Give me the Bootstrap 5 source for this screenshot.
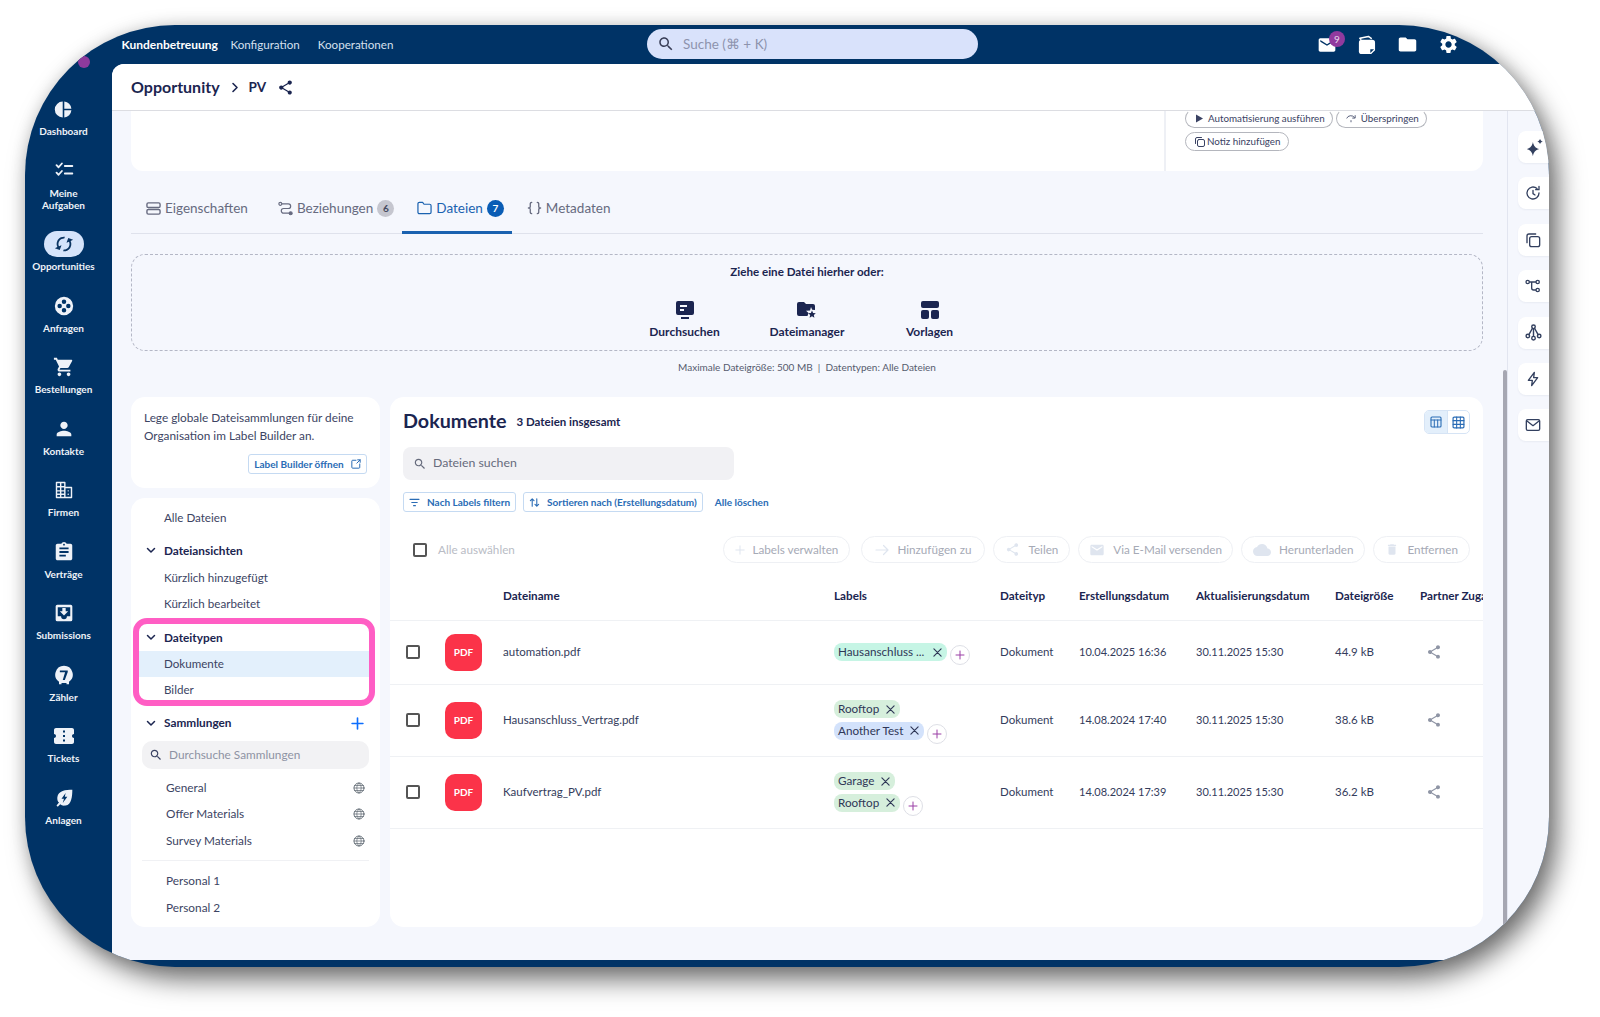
<!DOCTYPE html>
<html lang="de">
<head>
<meta charset="utf-8">
<title>Opportunity PV</title>
<link href="https://cdn.jsdelivr.net/npm/bootstrap@5.3.0/dist/css/bootstrap.min.css" rel="stylesheet">
<style>
html,body{height:100%;background:#fff;overflow:hidden}
body{font-family:Lato,"Liberation Sans",sans-serif;font-size:12px;color:#2f3757;-webkit-font-smoothing:antialiased}
svg.ic{display:block;fill:currentColor;flex:none}
svg.ln{display:block;fill:none;stroke:currentColor;stroke-width:2;stroke-linecap:round;stroke-linejoin:round;flex:none}
.win{width:1524px;height:942px;margin:25px 0 0 25px;border-radius:150px;overflow:hidden;background:#003366;box-shadow:9px 13px 26px rgba(0,0,0,.55),0 0 16px rgba(0,0,0,.12);display:flex;flex-direction:column;position:relative}
.c0{width:45px}.c1a{width:58px}.c2a{width:331px}.c3a{width:166px}.c4a{width:79px}.c5a{width:117px}.c6a{width:139px}.c7a{width:85px}.c8a{width:100px}
.topbar{height:39px;flex:none;position:relative;color:#fff}
.topnav{position:absolute;left:96.500px;top:12px;font-size:11.600px;line-height:15px;color:#d6e0ee}
.topnav b{color:#fff;font-weight:700;font-size:12px;margin-right:12.500px}
.topnav span+span{margin-left:18px}
.gsearch{position:absolute;left:622px;top:4px;width:331px;height:30px;border-radius:15px;background:#d9e2fb;color:#3a3f58;padding-left:10px;gap:8px;font-size:13.500px}
.gsearch span{color:#8d93ad}
.topico{position:absolute;left:1292px;top:0;height:39px;color:#fff}
.tmail{width:20px;margin-right:20px}
.tcopy{margin-right:21px}
.tfold{margin-right:20px}
.msgdot{position:absolute;left:12px;top:-4px;width:16px;height:16px;border-radius:50%;background:#913a9e;color:#e8d8ee;font-size:10px;line-height:16px;text-align:center}
.bodyrow{flex:1;min-height:0;display:flex}
.side{width:87px;flex:none;padding:32px 10px 0 0;color:#fff;position:relative}
.side-dot{position:absolute;left:53px;top:-8px;width:12px;height:12px;border-radius:50%;background:#8e3a9d}
.sitem{display:flex;flex-direction:column;align-items:center;margin-bottom:20.500px;font-size:10px;line-height:12px;font-weight:700;text-align:center;color:#eef2f8}
.sico{height:26px;width:40px;border-radius:13px;display:flex;align-items:center;justify-content:center;margin-bottom:3px}
.sitem.on .sico{background:#d5e4fb;color:#0b3563}
.sitem.on svg{transform:rotate(65deg)}
.mainp{flex:1;min-width:0;margin-bottom:7px;background:#f5f7fd;border-top-left-radius:12px;display:flex;flex-direction:column;overflow:hidden}
.crumb{height:47px;flex:none;background:#fff;border-bottom:1px solid #dcdde2;padding-left:19px;color:#1b2550}
.crumb .cx1{font-size:16px;font-weight:700;margin-right:11px}
.crumb .cx2{font-size:13.500px;font-weight:700;margin:0 11px 0 9px}
.panes{flex:1;min-height:0;display:flex}
.pane{flex:1;min-width:0;padding:0 24px 0 19px;position:relative;overflow:hidden}
.sbar{position:absolute;right:0;top:259px;bottom:0;width:4px;background:#a6a7b2;border-radius:2px 2px 0 0}
.rail{width:42px;flex:none;border-left:1px solid #e2e5f0;padding-top:20px;display:flex;flex-direction:column;align-items:flex-end;gap:14.400px}
.rbtn{width:31px;height:32px;background:#fff;border-radius:8px 0 0 8px;display:flex;align-items:center;padding-left:7px;color:#33405f;box-shadow:0 1px 2px rgba(40,50,90,.06)}
.topcard{height:60px;background:#fff;border-radius:0 0 12px 12px;position:relative;display:flex;justify-content:flex-end}
.acts{width:319px;border-left:2px solid #eef0f5;padding:0 0 0 19px;display:flex;flex-wrap:wrap;align-content:flex-start;gap:4px 3px}
.apill{height:19px;border:1px solid #b4b6bd;border-radius:10px;font-size:9.800px;line-height:17px;padding:0 7px 0 9px;color:#3a4263;display:flex;align-items:center;gap:5px;background:#fff}
.apill.tight{gap:1px;padding-left:8px}
.apill.cut{border-top-color:transparent;margin-top:-2px}
.tabsrow{height:63px;border-bottom:1px solid #dfe2ec;align-items:flex-end;flex-wrap:nowrap}
.tabi{height:61px;padding:0 15px;display:flex;align-items:center;gap:4px;font-size:13.500px;color:#676b80;border-bottom:3px solid transparent;margin-bottom:-1px;padding-top:12px;--bs-nav-link-color:#676b80}
.tabi.on{color:#1a62b0;border-bottom-color:#1a62b0}
.tcount{width:17px;height:17px;border-radius:50%;background:#c5c6cf;color:#444a60;font-size:10px;line-height:17px;text-align:center;padding:0;font-weight:700}
.tabi.on .tcount{background:#0a5db5;color:#fff}
.drop{height:97px;margin-top:20px;border:1px dashed #b4b7c6;border-radius:14px;padding-top:9px;text-align:center;color:#1b2550}
.drop .dt{font-size:11.600px;line-height:15px;font-weight:700}
.dacts{margin-top:21px}
.dact{width:122.500px;font-size:12px;font-weight:700;line-height:15px;display:flex;flex-direction:column;align-items:center;gap:4px}
.dnote{text-align:center;font-size:10px;line-height:14px;color:#555b6e;margin-top:9px;margin-bottom:23px}
.cols{gap:10px;height:530px}
.lcol{width:249px;flex:none;display:flex;flex-direction:column;gap:10px}
.box{background:#fff;border-radius:14px}
.info{height:91px;padding:12px 13px 0;line-height:17.500px;color:#3c4463;font-size:11.800px}
.lbtn{height:20px;border:1px solid #c5daf2;border-radius:3px;color:#2a6cb5;font-size:10px;font-weight:700;gap:7px;padding:0;margin:10px 0 0 auto;width:119px;line-height:18px;justify-content:center;white-space:nowrap}
.tree{flex:1;padding-top:6px;position:relative}
.trow{height:26.500px;display:flex;align-items:center;padding-left:33px;color:#3c4463;font-size:11.600px}
.trow.hd{font-weight:700;color:#1b2550;padding-left:15px;gap:8px;font-size:11.800px}
.trow.sub{padding-left:35px;justify-content:space-between;padding-right:15px;font-size:11.800px}
.mt7{margin-top:7px}
.hl{margin:1px 5px 4px 2px;height:88px;border:6px solid #ff5ec4;border-radius:14px;overflow:hidden}
.hl .trow{height:26px;padding-left:25px}
.hl .trow.hd{padding-left:7px;height:27px}
.hl .trow.sel{background:#e3f0fc}
.tsearch{margin:4px 11px 6px;height:28px;border-radius:10px;background:#f2f2f4;gap:6px;padding-left:7px;color:#8e92a3;font-size:11.800px}
.tsearch svg{color:#3a4263}
.thr{border-top:1px solid #f0f1f4;margin:6px 11px 7px}
.rcol{flex:1;min-width:0;overflow:hidden;padding-top:13px}
.rhead{padding:0 13px;height:24px}
.rhead h2{font-size:19.700px;font-weight:700;color:#1b2550;margin:-3px 0 0}
.rhead small{font-size:11.500px;font-weight:700;color:#1b2550;margin-left:10px;margin-top:0}
.vtog{height:24px;width:46px;border:1px solid #d6e4f5;border-radius:5px;overflow:hidden;color:#2a6cb5}
.vtog span{flex:1;display:flex;align-items:center;justify-content:center}
.vtog span:first-child{background:#e3effb;border-right:1px solid #d6e4f5}
.fsearch{margin:13px 0 0 13px;width:331px;height:33px;background:#f1f1f4;border-radius:8px;padding-left:10px;gap:6px;color:#666b7c;font-size:12.300px}
.frow{margin:12px 13px 0;height:20px;gap:7px}
.fbtn{height:20px;border:1px solid #c5daf2;border-radius:3px;color:#2a6cb5;font-size:10px;font-weight:700;padding:0 5px;gap:7px;line-height:18px}
.fclear{color:#2a6cb5;font-size:10px;font-weight:700;margin-left:5px}
.tools{margin:24px 13px 0 23px;height:27px;color:#b9bcc5;font-size:11.700px}
.cbx{width:14px;height:14px;margin:0;border:2px solid #555;border-radius:2px;background:#fff;flex:none}
.alltxt{margin-left:11px}
.tbtn{height:27px;border:1px solid #eef0f4;color:#a6aab6;font-size:11.700px;padding:0 11px;gap:8px;line-height:25px}
.tbtn svg{color:#dfe5ef}
.tbtn.wide{padding:0 13px}
.tbtn.slim{padding:0 10px}
.tbtn.first{margin-right:3px}
.tgap{gap:8px}
.dtable{width:1120px;table-layout:fixed;margin:9px 0 0;--bs-table-border-color:#eff1f4;--bs-table-color:#343c5c;font-size:11.500px}
.dtable th{height:48px;font-weight:700;font-size:11.700px;color:#1b2550;padding:0 10px;vertical-align:middle;white-space:nowrap;overflow:hidden;text-overflow:clip}
.dtable td{padding:0 10px;vertical-align:middle}
.dtable td:first-child{padding-left:16px}
.dtable td.dtm{font-size:11px}
.dtable tr.r1 td{height:64px}
.dtable tr.r2 td,.dtable tr.r3 td{height:72px}
.pdfi{width:37px;height:37px;border-radius:10px;background:#fb3349;color:#fff;font-size:10px;font-weight:700;display:flex;align-items:center;justify-content:center}
.lbl{height:18px;border-radius:8px;padding:0 5px 0 4px;font-size:11.700px;display:inline-flex;align-items:center;gap:7px;color:#2f3757;white-space:nowrap}
.lbl.g{background:#d6efdc}.lbl.b{background:#d3e2fb}.lbl.t{background:#c6f5e5;gap:9px}
.lrow{gap:3px;height:18px;margin:3.500px 0}
.ladd{width:20px;height:20px;border-radius:50%;border:1px solid #dedfe6;background:#fff;color:#9a3fa5;display:flex;align-items:center;justify-content:center;margin-top:2px}
.shr{color:#8f95a5}
.shr svg{margin-left:6px}
</style>
</head>
<body>
<svg class="d-none">
<symbol id="i-pie" viewBox="0 0 24 24"><path d="M11 2a10 10 0 0 0 0 20zM13 2a10 10 0 0 1 9 9h-9zM13 13h9a10 10 0 0 1-9 9z"/></symbol>
<symbol id="i-sync" viewBox="0 0 24 24"><path d="M12 4V1L8 5l4 4V6c3.31 0 6 2.69 6 6 0 1.01-.25 1.97-.7 2.8l1.46 1.46C19.54 15.03 20 13.57 20 12c0-4.42-3.58-8-8-8zm0 14c-3.31 0-6-2.69-6-6 0-1.01.25-1.97.7-2.8L5.24 7.74C4.46 8.97 4 10.43 4 12c0 4.42 3.58 8 8 8v3l4-4-4-4v3z"/></symbol>
<symbol id="i-cart" viewBox="0 0 24 24"><path d="M7 18c-1.1 0-1.99.9-1.99 2S5.9 22 7 22s2-.9 2-2-.9-2-2-2zM1 2v2h2l3.6 7.59-1.35 2.45c-.16.28-.25.61-.25.96 0 1.1.9 2 2 2h12v-2H7.42c-.14 0-.25-.11-.25-.25l.03-.12.9-1.63h7.45c.75 0 1.41-.41 1.75-1.03l3.58-6.49c.08-.14.12-.31.12-.48 0-.55-.45-1-1-1H5.21l-.94-2H1zm16 16c-1.1 0-1.99.9-1.99 2s.89 2 1.99 2 2-.9 2-2-.9-2-2-2z"/></symbol>
<symbol id="i-person" viewBox="0 0 24 24"><path d="M12 12c2.21 0 4-1.79 4-4s-1.79-4-4-4-4 1.79-4 4 1.79 4 4 4zm0 2c-2.67 0-8 1.34-8 4v2h16v-2c0-2.66-5.33-4-8-4z"/></symbol>
<symbol id="i-clip" viewBox="0 0 24 24"><path d="M19 3h-4.18C14.4 1.84 13.3 1 12 1s-2.4.84-2.82 2H5c-1.1 0-2 .9-2 2v14c0 1.1.9 2 2 2h14c1.1 0 2-.9 2-2V5c0-1.1-.9-2-2-2zm-7 0c.55 0 1 .45 1 1s-.45 1-1 1-1-.45-1-1 .45-1 1-1zm2 14H7v-2h7v2zm3-4H7v-2h10v2zm0-4H7V7h10v2z"/></symbol>
<symbol id="i-ticket" viewBox="0 0 24 24"><path d="M22 10V6c0-1.1-.9-2-2-2H4c-1.1 0-1.99.9-1.99 2v4c1.1 0 1.99.9 1.99 2s-.89 2-2 2v4c0 1.1.9 2 2 2h16c1.1 0 2-.9 2-2v-4c-1.1 0-2-.9-2-2s.9-2 2-2zm-9 7.5h-2v-2h2v2zm0-4.5h-2v-2h2v2zm0-4.5h-2v-2h2v2z"/></symbol>
<symbol id="i-folder" viewBox="0 0 24 24"><path d="M10 4H4c-1.1 0-1.99.9-1.99 2L2 18c0 1.1.9 2 2 2h16c1.1 0 2-.9 2-2V8c0-1.1-.9-2-2-2h-8l-2-2z"/></symbol>
<symbol id="i-gear" viewBox="0 0 24 24"><path d="M19.14 12.94c.04-.3.06-.61.06-.94 0-.32-.02-.64-.07-.94l2.03-1.58c.18-.14.23-.41.12-.61l-1.92-3.32c-.12-.22-.37-.29-.59-.22l-2.39.96c-.5-.38-1.03-.7-1.62-.94l-.36-2.54c-.04-.24-.24-.41-.48-.41h-3.84c-.24 0-.43.17-.47.41l-.36 2.54c-.59.24-1.13.57-1.62.94l-2.39-.96c-.22-.08-.47 0-.59.22L2.74 8.87c-.12.21-.08.47.12.61l2.03 1.58c-.05.3-.09.63-.09.94s.02.64.07.94l-2.03 1.58c-.18.14-.23.41-.12.61l1.92 3.32c.12.22.37.29.59.22l2.39-.96c.5.38 1.03.7 1.62.94l.36 2.54c.05.24.24.41.48.41h3.84c.24 0 .44-.17.47-.41l.36-2.54c.59-.24 1.13-.56 1.62-.94l2.39.96c.22.08.47 0 .59-.22l1.92-3.32c.12-.22.07-.47-.12-.61l-2.01-1.58zM12 15.6c-1.98 0-3.6-1.62-3.6-3.6s1.62-3.6 3.6-3.6 3.6 1.62 3.6 3.6-1.62 3.6-3.6 3.6z"/></symbol>
<symbol id="i-share" viewBox="0 0 24 24"><path d="M18 16.08c-.76 0-1.44.3-1.96.77L8.91 12.7c.05-.23.09-.46.09-.7s-.04-.47-.09-.7l7.05-4.11c.54.5 1.25.81 2.04.81 1.66 0 3-1.34 3-3s-1.34-3-3-3-3 1.34-3 3c0 .24.04.47.09.7L8.04 9.81C7.5 9.31 6.79 9 6 9c-1.66 0-3 1.34-3 3s1.34 3 3 3c.79 0 1.5-.31 2.04-.81l7.12 4.16c-.05.21-.08.43-.08.65 0 1.61 1.31 2.92 2.92 2.92 1.61 0 2.92-1.31 2.92-2.92s-1.31-2.92-2.92-2.92z"/></symbol>
<symbol id="i-search" viewBox="0 0 24 24"><path d="M15.5 14h-.79l-.28-.27C15.41 12.59 16 11.11 16 9.5 16 5.91 13.09 3 9.5 3S3 5.91 3 9.5 5.91 16 9.5 16c1.61 0 3.09-.59 4.23-1.57l.27.28v.79l5 4.99L20.49 19l-4.99-5zm-6 0C7.01 14 5 11.99 5 9.5S7.01 5 9.5 5 14 7.01 14 9.5 11.99 14 9.5 14z"/></symbol>
<symbol id="i-cloud" viewBox="0 0 24 24"><path d="M19.35 10.04C18.67 6.59 15.64 4 12 4 9.11 4 6.6 5.64 5.35 8.04 2.34 8.36 0 10.91 0 14c0 3.31 2.69 6 6 6h13c2.76 0 5-2.24 5-5 0-2.64-2.05-4.78-4.65-4.96z"/></symbol>
<symbol id="i-trash" viewBox="0 0 24 24"><path d="M6 19c0 1.1.9 2 2 2h8c1.1 0 2-.9 2-2V7H6v12zM19 4h-3.5l-1-1h-5l-1 1H5v2h14V4z"/></symbol>
<symbol id="i-mailf" viewBox="0 0 24 24"><path d="M20 4H4c-1.1 0-2 .9-2 2v12c0 1.1.9 2 2 2h16c1.1 0 2-.9 2-2V6c0-1.1-.9-2-2-2zm0 4-8 5-8-5V6l8 5 8-5v2z"/></symbol>
</svg>

<div class="win">
  <header class="topbar">
    <div class="topnav d-flex"><b>Kundenbetreuung</b><span>Konfiguration</span><span>Kooperationen</span></div>
    <div class="gsearch d-flex align-items-center"><svg class="ic" width="18" height="18"><use href="#i-search"/></svg><span>Suche (⌘ + K)</span></div>
    <div class="topico d-flex align-items-center">
      <div class="position-relative tmail"><svg class="ic" width="20" height="20"><use href="#i-mailf"/></svg><span class="msgdot">9</span></div>
      <svg class="ln tcopy" width="19" height="20" viewBox="0 0 20 21"><path d="M4 4.500 3 3.500l9-2 3 2" stroke-width="1.600"/><path d="M5 5h11a3 3 0 0 1 3 3v8l-4 4H5a3 3 0 0 1-3-3V8a3 3 0 0 1 3-3z" fill="currentColor" stroke="none"/><path d="M14 19v-4h4z" fill="#003366" stroke="none"/></svg>
      <svg class="ic tfold" width="21" height="21"><use href="#i-folder"/></svg>
      <svg class="ic" width="21" height="21"><use href="#i-gear"/></svg>
    </div>
  </header>
  <div class="bodyrow">
    <nav class="side">
      <span class="side-dot"></span>
      <div class="sitem"><div class="sico"><svg class="ic" width="19" height="19"><use href="#i-pie"/></svg></div>Dashboard</div>
      <div class="sitem"><div class="sico"><svg class="ln" width="20" height="20" viewBox="0 0 24 24"><path d="m3 5 2.500 2.500L9.500 3M3 14l2.500 2.500L9.500 12M13 6h9M13 15h9" stroke-width="2.200"/></svg></div>Meine<br>Aufgaben</div>
      <div class="sitem on"><div class="sico"><svg class="ic" width="22" height="22"><use href="#i-sync"/></svg></div>Opportunities</div>
      <div class="sitem"><div class="sico"><svg class="ic" width="20" height="20" viewBox="0 0 24 24"><path fill-rule="evenodd" d="M12 1a11 11 0 1 0 0 22 11 11 0 0 0 0-22zm0 3.200a2.700 2.700 0 1 1 0 5.400 2.700 2.700 0 0 1 0-5.400zM6.800 9.300a2.700 2.700 0 1 1 0 5.400 2.700 2.700 0 0 1 0-5.400zm10.400 0a2.700 2.700 0 1 1 0 5.400 2.700 2.700 0 0 1 0-5.400zM12 14.400a2.700 2.700 0 1 1 0 5.400 2.700 2.700 0 0 1 0-5.400z"/></svg></div>Anfragen</div>
      <div class="sitem"><div class="sico"><svg class="ic" width="22" height="22"><use href="#i-cart"/></svg></div>Bestellungen</div>
      <div class="sitem"><div class="sico"><svg class="ic" width="22" height="22"><use href="#i-person"/></svg></div>Kontakte</div>
      <div class="sitem"><div class="sico"><svg class="ln" width="20" height="20" viewBox="0 0 24 24"><path d="M3 21V3h10v18M13 9h8v12H3M3 8h10M3 13h10M3 17h10M8 3v18M17 13h.1M17 17h.1" stroke-width="1.700"/></svg></div>Firmen</div>
      <div class="sitem"><div class="sico"><svg class="ic" width="22" height="22"><use href="#i-clip"/></svg></div>Verträge</div>
      <div class="sitem"><div class="sico"><svg class="ic" width="20" height="20" viewBox="0 0 24 24"><path fill-rule="evenodd" d="M4 2h16a2 2 0 0 1 2 2v16a2 2 0 0 1-2 2H4a2 2 0 0 1-2-2V4a2 2 0 0 1 2-2zm.500 12v2h4a3.500 3.500 0 0 0 7 0h4V5h-15zM10 6h4v4h3l-5 5-5-5h3z"/></svg></div>Submissions</div>
      <div class="sitem"><div class="sico"><svg class="ic" width="20" height="20" viewBox="0 0 24 24"><path fill-rule="evenodd" d="M12 1a10.500 10.500 0 0 1 6 19.100V23h-3v-1.500H9V23H6v-2.900A10.500 10.500 0 0 1 12 1zM7 6.500v2.300h6.300L10.500 18H13l3.500-9.700V6.500z"/></svg></div>Zähler</div>
      <div class="sitem"><div class="sico"><svg class="ic" width="24" height="24"><use href="#i-ticket"/></svg></div>Tickets</div>
      <div class="sitem"><div class="sico"><svg class="ic" width="20" height="20" viewBox="0 0 24 24"><path fill-rule="evenodd" d="M22 2C14 2 5 3 4 11c-.3 3 .5 5 2 6.500L3 21l1.500 1.500 3-3C9 21 11 21.500 14 21c7-1 8-11 8-19zM14 6l-5 7h3l-1.500 5 5.500-7.500h-3z"/></svg></div>Anlagen</div>
    </nav>
    <main class="mainp">
      <div class="crumb d-flex align-items-center">
        <span class="cx1">Opportunity</span>
        <svg class="ln" width="9" height="11" viewBox="0 0 9 11"><path d="m2 1.500 4 4-4 4" stroke-width="1.600"/></svg>
        <span class="cx2">PV</span>
        <svg class="ic" width="17" height="17"><use href="#i-share"/></svg>
      </div>
      <div class="panes">
        <div class="pane">
          <span class="sbar"></span>
          <div class="topcard">
            <div class="acts">
              <span class="apill cut"><svg class="ic" width="8" height="9" viewBox="0 0 8 9"><path d="M1 .500 8 4.500 1 8.500z"/></svg>Automatisierung ausführen</span>
              <span class="apill cut"><svg class="ln" width="10" height="9" viewBox="0 0 24 20" stroke-width="3"><path d="M2 9a10 8 0 0 1 18-2M12 15v3M22 3v6h-6"/></svg>Überspringen</span>
              <span class="apill tight"><svg class="ln" width="12" height="12" viewBox="0 0 24 24"><rect x="7" y="7" width="14" height="14" rx="3"/><path d="M3 15V6a3 3 0 0 1 3-3h9"/></svg>Notiz hinzufügen</span>
            </div>
          </div>
          <ul class="nav tabsrow">
            <li class="nav-item"><a class="nav-link tabi" href="#"><svg class="ln" width="15" height="15" viewBox="0 0 16 16"><rect x="1" y="2" width="14" height="5" rx="1.500" stroke-width="1.500"/><rect x="1" y="9" width="14" height="5" rx="1.500" stroke-width="1.500"/></svg>Eigenschaften</a></li>
            <li class="nav-item"><a class="nav-link tabi pe-2" href="#"><svg class="ln" width="15" height="15" viewBox="0 0 16 16"><circle cx="2.500" cy="3" r="1.600" stroke-width="1.200"/><circle cx="13.500" cy="13" r="1.600" fill="currentColor" stroke-width="1.200"/><path d="M4 3h7a2 2 0 0 1 0 5H6a2 2 0 0 0 0 5h6" stroke-width="1.300"/></svg>Beziehungen<span class="badge tcount">6</span></a></li>
            <li class="nav-item"><a class="nav-link tabi on pe-2" href="#"><svg class="ln" width="15" height="14" viewBox="0 0 16 14"><path d="M1 2.500A1.500 1.500 0 0 1 2.500 1H6l1.500 2h6A1.500 1.500 0 0 1 15 4.500v7a1.500 1.500 0 0 1-1.500 1.500h-11A1.500 1.500 0 0 1 1 11.500z" stroke-width="1.300"/></svg>Dateien<span class="badge tcount">7</span></a></li>
            <li class="nav-item"><a class="nav-link tabi" href="#"><svg class="ln" width="15" height="14" viewBox="0 0 16 14"><path d="M5 1C3 1 3.500 3 3.500 5S2.500 7 1.500 7c1 0 2 0 2 2S3 13 5 13M11 1c2 0 1.500 2 1.500 4s1 2 2 2c-1 0-2 0-2 2s.5 4-1.500 4" stroke-width="1.400"/></svg>Metadaten</a></li>
          </ul>
          <div class="drop">
            <div class="dt">Ziehe eine Datei hierher oder:</div>
            <div class="dacts d-flex justify-content-center">
              <div class="dact"><svg class="ic" width="18" height="20" viewBox="0 0 18 20"><path fill-rule="evenodd" d="M2 1h14a2 2 0 0 1 2 2v10a2 2 0 0 1-2 2H2a2 2 0 0 1-2-2V3a2 2 0 0 1 2-2zm2 4v2h7V5zm0 4v2h4V9z"/><rect x="5" y="17" width="8" height="2"/></svg>Durchsuchen</div>
              <div class="dact"><svg class="ic" width="20" height="20" viewBox="0 0 20 20"><path d="M7 2H2a2 2 0 0 0-2 2v10a2 2 0 0 0 2 2h8.500l1-3-2.500-2.300 4-.3L14 7l1.200 2.700L18 10V6a2 2 0 0 0-2-2H9z"/><path d="m15 10.500 1.100 2.500 2.700.2-2 1.800.6 2.700-2.400-1.400-2.400 1.400.6-2.700-2-1.800 2.700-.2z"/></svg>Dateimanager</div>
              <div class="dact"><svg class="ic" width="18" height="20" viewBox="0 0 18 20"><rect y="1" width="18" height="7" rx="2"/><rect y="10" width="8" height="9" rx="2"/><rect x="10" y="10" width="8" height="9" rx="2"/></svg>Vorlagen</div>
            </div>
          </div>
          <div class="dnote">Maximale Dateigröße: 500 MB &nbsp;|&nbsp; Datentypen: Alle Dateien</div>
          <div class="cols d-flex">
            <div class="lcol">
              <div class="box info">
                Lege globale Dateisammlungen für deine Organisation im Label Builder an.
                <a class="btn lbtn d-flex align-items-center" href="#">Label Builder öffnen<svg class="ln" width="10" height="10" viewBox="0 0 12 12"><path d="M6 1.500H2a1 1 0 0 0-1 1V10a1 1 0 0 0 1 1h7.500a1 1 0 0 0 1-1V6M7 5l4-4M8 1h3v3" stroke-width="1.200"/></svg></a>
              </div>
              <div class="box tree">
                <div class="trow">Alle Dateien</div>
                <div class="trow hd mt7"><svg class="ln" width="10" height="7" viewBox="0 0 10 7"><path d="m1.500 1.500 3.500 3.500 3.500-3.500" stroke-width="1.500"/></svg>Dateiansichten</div>
                <div class="trow">Kürzlich hinzugefügt</div>
                <div class="trow">Kürzlich bearbeitet</div>
                <div class="hl">
                  <div class="trow hd"><svg class="ln" width="10" height="7" viewBox="0 0 10 7"><path d="m1.500 1.500 3.500 3.500 3.500-3.500" stroke-width="1.500"/></svg>Dateitypen</div>
                  <div class="trow sel">Dokumente</div>
                  <div class="trow">Bilder</div>
                </div>
                <div class="trow hd pe-3"><svg class="ln" width="10" height="7" viewBox="0 0 10 7"><path d="m1.500 1.500 3.500 3.500 3.500-3.500" stroke-width="1.500"/></svg>Sammlungen<svg class="ln ms-auto text-primary" width="13" height="13" viewBox="0 0 12 12"><path d="M6 1v10M1 6h10" stroke-width="1.500"/></svg></div>
                <div class="tsearch d-flex align-items-center"><svg class="ic" width="14" height="14"><use href="#i-search"/></svg>Durchsuche Sammlungen</div>
                <div class="trow sub">General<svg class="ln text-secondary" width="12" height="12" viewBox="0 0 12 12"><circle cx="6" cy="6" r="5" stroke-width="1"/><path d="M1 6h10M1.500 3.500h9M1.500 8.500h9M6 1c-3 3-3 7 0 10M6 1c3 3 3 7 0 10" stroke-width=".8"/></svg></div>
                <div class="trow sub">Offer Materials<svg class="ln text-secondary" width="12" height="12" viewBox="0 0 12 12"><circle cx="6" cy="6" r="5" stroke-width="1"/><path d="M1 6h10M1.500 3.500h9M1.500 8.500h9M6 1c-3 3-3 7 0 10M6 1c3 3 3 7 0 10" stroke-width=".8"/></svg></div>
                <div class="trow sub">Survey Materials<svg class="ln text-secondary" width="12" height="12" viewBox="0 0 12 12"><circle cx="6" cy="6" r="5" stroke-width="1"/><path d="M1 6h10M1.500 3.500h9M1.500 8.500h9M6 1c-3 3-3 7 0 10M6 1c3 3 3 7 0 10" stroke-width=".8"/></svg></div>
                <div class="thr"></div>
                <div class="trow sub">Personal 1</div>
                <div class="trow sub">Personal 2</div>
              </div>
            </div>
            <div class="box rcol">
              <div class="rhead d-flex align-items-center">
                <h2>Dokumente</h2><small>3 Dateien insgesamt</small>
                <div class="vtog d-flex ms-auto"><span><svg class="ln" width="12" height="12" viewBox="0 0 12 12"><rect x="1" y="1" width="10" height="10" rx="1" stroke-width="1.100"/><path d="M1 4h10M4.300 4v7M7.700 4v7" stroke-width="1"/></svg></span><span><svg class="ln" width="13" height="13" viewBox="0 0 12 12"><rect x="1" y="1" width="10" height="10" rx="1" stroke-width="1.100"/><path d="M1 4.300h10M1 7.700h10M4.300 1v10M7.700 1v10" stroke-width="1"/></svg></span></div>
              </div>
              <div class="fsearch d-flex align-items-center"><svg class="ic" width="14" height="14"><use href="#i-search"/></svg>Dateien suchen</div>
              <div class="frow d-flex align-items-center">
                <a class="btn fbtn d-flex align-items-center" href="#"><svg class="ln" width="11" height="9" viewBox="0 0 12 10"><path d="M1 1.500h10M3 5h6M5 8.500h2" stroke-width="1.300"/></svg>Nach Labels filtern</a>
                <a class="btn fbtn d-flex align-items-center" href="#"><svg class="ln" width="11" height="11" viewBox="0 0 12 12"><path d="M3.500 10V2M1.500 4l2-2 2 2M8.500 2v8M6.500 8l2 2 2-2" stroke-width="1.200"/></svg>Sortieren nach (Erstellungsdatum)</a>
                <span class="fclear">Alle löschen</span>
              </div>
              <div class="tools d-flex align-items-center">
                <span class="cbx"></span><span class="alltxt">Alle auswählen</span>
                <div class="d-flex tgap ms-auto">
                  <button class="btn tbtn first rounded-pill d-flex align-items-center" type="button"><svg class="ln" width="10" height="10" viewBox="0 0 12 12"><path d="M6 1v10M1 6h10" stroke-width="1.200"/></svg>Labels verwalten</button>
                  <button class="btn tbtn wide rounded-pill d-flex align-items-center" type="button"><svg class="ln" width="14" height="12" viewBox="0 0 14 12"><path d="M1 6h12M8.500 1.500 13 6l-4.500 4.500" stroke-width="1.200"/></svg>Hinzufügen zu</button>
                  <button class="btn tbtn rounded-pill d-flex align-items-center" type="button"><svg class="ic" width="15" height="15"><use href="#i-share"/></svg>Teilen</button>
                  <button class="btn tbtn slim rounded-pill d-flex align-items-center" type="button"><svg class="ic" width="16" height="16"><use href="#i-mailf"/></svg>Via E-Mail versenden</button>
                  <button class="btn tbtn rounded-pill d-flex align-items-center" type="button"><svg class="ic" width="18" height="18"><use href="#i-cloud"/></svg>Herunterladen</button>
                  <button class="btn tbtn rounded-pill d-flex align-items-center" type="button"><svg class="ic" width="14" height="15"><use href="#i-trash"/></svg>Entfernen</button>
                </div>
              </div>
              <table class="table dtable">
                <colgroup><col class="c0"><col class="c1a"><col class="c2a"><col class="c3a"><col class="c4a"><col class="c5a"><col class="c6a"><col class="c7a"><col class="c8a"></colgroup>
                <thead><tr><th></th><th></th><th>Dateiname</th><th>Labels</th><th>Dateityp</th><th>Erstellungsdatum</th><th>Aktualisierungsdatum</th><th>Dateigröße</th><th>Partner Zugang</th></tr></thead>
                <tbody>
                  <tr class="r1"><td><span class="cbx d-block"></span></td><td><div class="pdfi">PDF</div></td><td>automation.pdf</td>
                    <td><div class="d-flex lrow"><span class="lbl t">Hausanschluss ...<svg class="ln" width="9" height="9" viewBox="0 0 10 10"><path d="m1 1 8 8M9 1 1 9" stroke-width="1.300"/></svg></span><span class="ladd"><svg class="ln" width="10" height="10" viewBox="0 0 10 10"><path d="M5 1v8M1 5h8" stroke-width="1"/></svg></span></div></td>
                    <td>Dokument</td><td class="dtm">10.04.2025 16:36</td><td class="dtm">30.11.2025 15:30</td><td>44.9 kB</td><td class="shr"><svg class="ic" width="16" height="16"><use href="#i-share"/></svg></td></tr>
                  <tr class="r2"><td><span class="cbx d-block"></span></td><td><div class="pdfi">PDF</div></td><td>Hausanschluss_Vertrag.pdf</td>
                    <td><div class="d-flex lrow"><span class="lbl g">Rooftop<svg class="ln" width="9" height="9" viewBox="0 0 10 10"><path d="m1 1 8 8M9 1 1 9" stroke-width="1.300"/></svg></span></div><div class="d-flex lrow"><span class="lbl b">Another Test<svg class="ln" width="9" height="9" viewBox="0 0 10 10"><path d="m1 1 8 8M9 1 1 9" stroke-width="1.300"/></svg></span><span class="ladd"><svg class="ln" width="10" height="10" viewBox="0 0 10 10"><path d="M5 1v8M1 5h8" stroke-width="1"/></svg></span></div></td>
                    <td>Dokument</td><td class="dtm">14.08.2024 17:40</td><td class="dtm">30.11.2025 15:30</td><td>38.6 kB</td><td class="shr"><svg class="ic" width="16" height="16"><use href="#i-share"/></svg></td></tr>
                  <tr class="r3"><td><span class="cbx d-block"></span></td><td><div class="pdfi">PDF</div></td><td>Kaufvertrag_PV.pdf</td>
                    <td><div class="d-flex lrow"><span class="lbl g">Garage<svg class="ln" width="9" height="9" viewBox="0 0 10 10"><path d="m1 1 8 8M9 1 1 9" stroke-width="1.300"/></svg></span></div><div class="d-flex lrow"><span class="lbl g">Rooftop<svg class="ln" width="9" height="9" viewBox="0 0 10 10"><path d="m1 1 8 8M9 1 1 9" stroke-width="1.300"/></svg></span><span class="ladd"><svg class="ln" width="10" height="10" viewBox="0 0 10 10"><path d="M5 1v8M1 5h8" stroke-width="1"/></svg></span></div></td>
                    <td>Dokument</td><td class="dtm">14.08.2024 17:39</td><td class="dtm">30.11.2025 15:30</td><td>36.2 kB</td><td class="shr"><svg class="ic" width="16" height="16"><use href="#i-share"/></svg></td></tr>
                </tbody>
              </table>
            </div>
          </div>
        </div>
        <aside class="rail">
          <div class="rbtn"><svg class="ic" width="19" height="19" viewBox="0 0 24 24"><path d="M10 5c1 5 3 7.500 8 9-5 1.500-7 4-8 9-1-5-3-7.500-8-9 5-1.500 7-4 8-9zM19 1c.5 2 1.500 3 3.500 3.500-2 .5-3 1.500-3.500 3.500-.5-2-1.500-3-3.500-3.500 2-.5 3-1.500 3.500-3.500z"/></svg></div>
          <div class="rbtn"><svg class="ln" width="16" height="16" viewBox="0 0 24 24"><path d="M21 12a9 9 0 1 1-3-6.700M21 2v5h-5M12 8v5l3 2"/></svg></div>
          <div class="rbtn"><svg class="ln" width="16" height="16" viewBox="0 0 24 24"><rect x="7" y="7" width="15" height="15" rx="3"/><path d="M3 16V6a3 3 0 0 1 3-3h10"/></svg></div>
          <div class="rbtn"><svg class="ln" width="16" height="16" viewBox="0 0 24 24"><circle cx="4" cy="6" r="2.500"/><circle cx="19" cy="6" r="2.500"/><circle cx="19" cy="18" r="2.500"/><path d="M7 6h9M10 6v9a3 3 0 0 0 3 3h3"/></svg></div>
          <div class="rbtn"><svg class="ln" width="17" height="17" viewBox="0 0 24 24"><circle cx="12" cy="4" r="2.500"/><circle cx="4" cy="17" r="2.500"/><circle cx="12" cy="20" r="2.500"/><circle cx="20" cy="17" r="2.500"/><path d="M12 7v10M10.500 6 5.500 15M13.500 6l5 9"/></svg></div>
          <div class="rbtn"><svg class="ln" width="16" height="16" viewBox="0 0 24 24"><path d="M14 2 5 14h6l-1 8 9-12h-6z"/></svg></div>
          <div class="rbtn"><svg class="ln" width="16" height="16" viewBox="0 0 24 24"><rect x="2" y="4" width="20" height="16" rx="2"/><path d="m3 6 9 7 9-7"/></svg></div>
        </aside>
      </div>
    </main>
  </div>
</div>
<script src="https://cdn.jsdelivr.net/npm/bootstrap@5.3.0/dist/js/bootstrap.bundle.min.js"></script>
</body>
</html>
